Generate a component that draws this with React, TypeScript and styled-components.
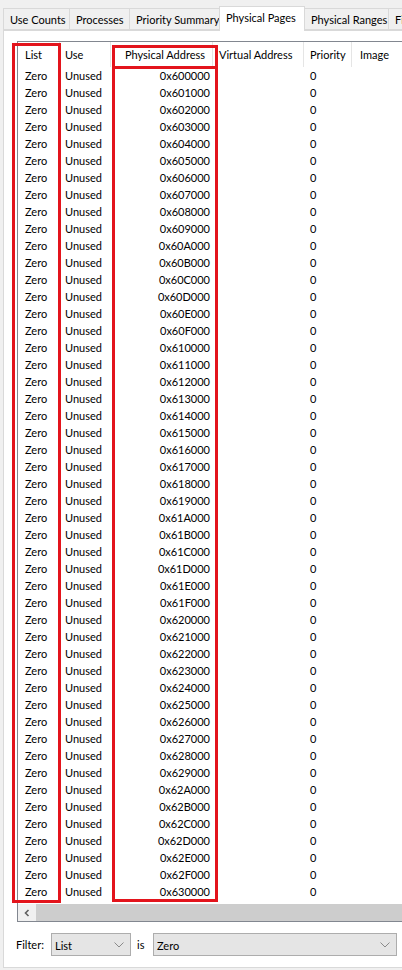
import React from 'react';
import styled, { createGlobalStyle } from 'styled-components';

const GlobalStyle = createGlobalStyle`
  html, body {
    margin: 0;
    padding: 0;
    background: #f0f0f0;
  }
  body {
    font-family: Lato, "Liberation Sans", Arial, sans-serif;
    font-size: 11px;
    color: #000;
  }
`;

const tabs = [
  { label: 'Use Counts', width: 67 },
  { label: 'Processes', width: 61 },
  { label: 'Priority Summary', width: 91 },
  { label: 'Physical Pages', width: 86, active: true },
  { label: 'Physical Ranges', width: 85 },
  { label: 'File Summary', width: 80 },
];

const columns = [
  { key: 'list', title: 'List', width: 42, pad: 7 },
  { key: 'use', title: 'Use', width: 51, pad: 5 },
  { key: 'phys', title: 'Physical Address', width: 102, pad: 6, right: true },
  { key: 'virt', title: 'Virtual Address', width: 91, pad: 6 },
  { key: 'prio', title: 'Priority', width: 48, pad: 6 },
  { key: 'image', title: 'Image', width: 120, pad: 8 },
];

const rows = Array.from({ length: 49 }, (_, i) => ({
  list: 'Zero',
  use: 'Unused',
  phys: '0x' + (0x600000 + i * 0x1000).toString(16).toUpperCase(),
  virt: '',
  prio: '0',
  image: '',
}));

export default function App() {
  return (
    <>
      <GlobalStyle />
      <Window>
        <TabStrip>
          {tabs.map(t => (
            <Tab key={t.label} $active={!!t.active} $width={t.width}>
              {t.label}
            </Tab>
          ))}
        </TabStrip>

        <TabPage>
          <ListView>
            <HeaderRow>
              {columns.map(c => (
                <HeaderCell key={c.key} $width={c.width} $pad={c.pad} $right={c.right}>
                  {c.title}
                </HeaderCell>
              ))}
            </HeaderRow>
            <Rows>
              {rows.map(r => (
                <Row key={r.phys}>
                  {columns.map(c => (
                    <Cell key={c.key} $width={c.width} $pad={c.pad} $right={c.right}>
                      {(r as any)[c.key]}
                    </Cell>
                  ))}
                </Row>
              ))}
            </Rows>
            <HScroll>
              <ScrollButton>
                <svg width="8" height="8" viewBox="0 0 8 8">
                  <path d="M5.5 1 L2.5 4 L5.5 7" fill="none" stroke="#606060" strokeWidth="1.6" />
                </svg>
              </ScrollButton>
              <Thumb />
            </HScroll>
          </ListView>

          <FilterBar>
            <FilterLabel $width={29}>Filter:</FilterLabel>
            <Combo $width={80}>
              <span>List</span>
              <Chevron />
            </Combo>
            <FilterLabel $width={10}>is</FilterLabel>
            <Combo $width={244}>
              <span>Zero</span>
              <Chevron />
            </Combo>
          </FilterBar>
        </TabPage>

        <Marker $left={12} $top={43} $width={49} $height={860} />
        <Marker $left={112} $top={45} $width={106} $height={857} />
        <MarkerLine $left={112} $top={66} $width={106} />
      </Window>
    </>
  );
}

const Chevron = () => (
  <svg width="10" height="6" viewBox="0 0 10 6">
    <path d="M0.5 0.5 L5 5 L9.5 0.5" fill="none" stroke="#8a8a8a" strokeWidth="1" />
  </svg>
);

const Window = styled.div`
  position: relative;
  width: 402px;
  height: 970px;
  overflow: hidden;
  background: #f0f0f0;
  display: flex;
  flex-direction: column;
`;

const TabStrip = styled.div`
  display: flex;
  align-items: flex-end;
  height: 30px;
  padding-left: 3px;
  flex-shrink: 0;
  position: relative;
  z-index: 1;
`;

const Tab = styled.div<{ $active: boolean; $width: number }>`
  box-sizing: border-box;
  flex-shrink: 0;
  width: ${p => p.$width}px;
  height: ${p => (p.$active ? 25 : 22)}px;
  margin-bottom: ${p => (p.$active ? -1 : 0)}px;
  padding-left: 6px;
  padding-top: 4px;
  white-space: nowrap;
  overflow: hidden;
  background: ${p => (p.$active ? '#fff' : '#f0f0f0')};
  border: 1px solid #d9d9d9;
  border-bottom: ${p => (p.$active ? 'none' : '1px solid #d9d9d9')};
  margin-right: -1px;
  ${p => p.$active && 'position: relative; z-index: 2;'}
`;

const TabPage = styled.div`
  box-sizing: border-box;
  margin-left: 3px;
  width: 430px;
  height: 938px;
  background: #fff;
  border: 1px solid #d9d9d9;
  padding: 10px 0 0 13px;
  display: flex;
  flex-direction: column;
`;

const ListView = styled.div`
  box-sizing: border-box;
  height: 881px;
  border: 1px solid #828790;
  background: #fff;
  display: flex;
  flex-direction: column;
  overflow: hidden;
`;

const HeaderRow = styled.div`
  display: flex;
  height: 25px;
  flex-shrink: 0;
`;

const HeaderCell = styled.div<{ $width: number; $pad: number; $right?: boolean }>`
  box-sizing: border-box;
  flex-shrink: 0;
  width: ${p => p.$width}px;
  display: flex;
  align-items: center;
  justify-content: ${p => (p.$right ? 'flex-end' : 'flex-start')};
  padding-left: ${p => p.$pad}px;
  padding-right: ${p => (p.$right ? 7 : 0)}px;
  border-right: 1px solid #e5e5e5;
  white-space: nowrap;
  overflow: hidden;
`;

const Rows = styled.div`
  flex: 1;
  overflow: hidden;
`;

const Row = styled.div`
  display: flex;
  height: 17px;
  align-items: center;
`;

const Cell = styled.div<{ $width: number; $pad: number; $right?: boolean }>`
  box-sizing: border-box;
  flex-shrink: 0;
  width: ${p => p.$width}px;
  padding-left: ${p => p.$pad}px;
  padding-right: ${p => (p.$right ? 3 : 0)}px;
  text-align: ${p => (p.$right ? 'right' : 'left')};
  white-space: nowrap;
`;

const HScroll = styled.div`
  display: flex;
  height: 17px;
  flex-shrink: 0;
  background: #f0f0f0;
`;

const ScrollButton = styled.div`
  width: 17px;
  display: flex;
  align-items: center;
  justify-content: center;
`;

const Thumb = styled.div`
  flex: 1;
  margin-left: 1px;
  background: #cdcdcd;
`;

const FilterBar = styled.div`
  display: flex;
  align-items: center;
  gap: 6px;
  margin-top: 11px;
  margin-left: -1px;
  height: 23px;
`;

const FilterLabel = styled.span<{ $width: number }>`
  width: ${p => p.$width}px;
  flex-shrink: 0;
  white-space: nowrap;
`;

const Combo = styled.div<{ $width: number }>`
  box-sizing: border-box;
  width: ${p => p.$width}px;
  height: 23px;
  flex-shrink: 0;
  background: #e5e5e5;
  border: 1px solid #adadad;
  display: flex;
  align-items: center;
  justify-content: space-between;
  padding: 1px 6px 0 3px;
`;

const Marker = styled.div<{ $left: number; $top: number; $width: number; $height: number }>`
  position: absolute;
  box-sizing: border-box;
  left: ${p => p.$left}px;
  top: ${p => p.$top}px;
  width: ${p => p.$width}px;
  height: ${p => p.$height}px;
  border: 3px solid #e3141c;
  pointer-events: none;
`;

const MarkerLine = styled.div<{ $left: number; $top: number; $width: number }>`
  position: absolute;
  left: ${p => p.$left}px;
  top: ${p => p.$top}px;
  width: ${p => p.$width}px;
  height: 3px;
  background: #e3141c;
`;
